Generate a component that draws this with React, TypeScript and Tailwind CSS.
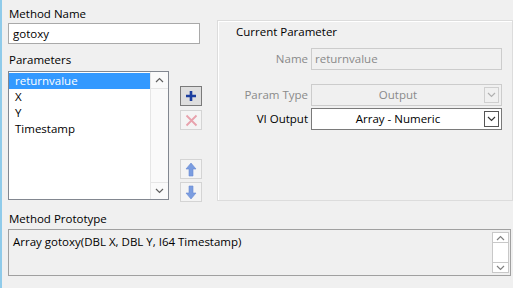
import React from "react";

const items = ["returnvalue", "X", "Y", "Timestamp"];

function Chevron({ up = false, color = "#606060" }: { up?: boolean; color?: string }) {
  return (
    <svg width="9" height="6" viewBox="0 0 9 6">
      <path
        d={up ? "M1 5 L4.5 1.5 L8 5" : "M1 1 L4.5 4.5 L8 1"}
        fill="none"
        stroke={color}
        strokeWidth="1.2"
      />
    </svg>
  );
}

function ComboBox({ value, disabled }: { value: string; disabled?: boolean }) {
  return (
    <div
      className={`flex h-[22px] w-[191px] items-center border ${
        disabled ? "border-[#cccccc] bg-[#f0f0f0] text-[#8a8a8a]" : "border-[#7a7a7a] bg-white text-black"
      }`}
    >
      <div className="flex-1 text-center">{value}</div>
      <div
        className={`mr-[2px] flex h-[16px] w-[15px] items-center justify-center border ${
          disabled ? "border-[#cfcfcf]" : "border-[#555555]"
        }`}
      >
        <Chevron color={disabled ? "#b0b0b0" : "#333333"} />
      </div>
    </div>
  );
}

function ToolButton({ children, enabled }: { children: React.ReactNode; enabled?: boolean }) {
  return (
    <div
      className={`flex h-[20px] w-[22px] items-center justify-center border ${
        enabled ? "border-[#7a7a7a] bg-[#dedede]" : "border-[#d4d4d4] bg-[#f4f4f4]"
      }`}
    >
      {children}
    </div>
  );
}

export default function App() {
  return (
    <div className="flex h-[288px] w-[513px] flex-col overflow-hidden border-l-2 border-[#8fcbea] bg-[#f0f0f0] pl-[6px] pt-[6px] font-['Segoe_UI','Open_Sans',sans-serif] text-[11.5px] leading-[16px] text-black">
      <div className="flex h-[196px]">
        {/* left column */}
        <div className="flex w-[194px] flex-col">
          <div className="pl-[1px]">Method Name</div>
          <div className="mt-[1px] flex h-[22px] w-[192px] items-center border border-[#a9a9a9] bg-white pl-[4px]">
            gotoxy
          </div>
          <div className="mt-[8px] pl-[1px]">Parameters</div>
          <div className="mt-[3px] flex">
            <div className="flex h-[129px] w-[161px] border border-[#828790] bg-white">
              <div className="flex-1 pt-[1px]">
                {items.map((it, i) => (
                  <div
                    key={it}
                    className={`h-[16px] pl-[6px] ${i === 0 ? "bg-[#3399ff] text-white" : ""}`}
                  >
                    {it}
                  </div>
                ))}
              </div>
              <div className="flex w-[18px] flex-col justify-between border-l border-[#e6e6e6] bg-[#fafafa]">
                <div className="flex h-[17px] items-center justify-center border-b border-[#e6e6e6]">
                  <Chevron up />
                </div>
                <div className="flex h-[17px] items-center justify-center border-t border-[#e6e6e6]">
                  <Chevron />
                </div>
              </div>
            </div>
            <div className="ml-[11px] flex flex-col pt-[15px]">
              <ToolButton enabled>
                <svg width="12" height="12" viewBox="0 0 12 12">
                  <path d="M6 1 V11 M1 6 H11" stroke="#1c3e9e" strokeWidth="2.6" />
                </svg>
              </ToolButton>
              <div className="mt-[4px]">
                <ToolButton>
                  <svg width="13" height="13" viewBox="0 0 13 13">
                    <path d="M1.5 1.5 L11.5 11.5 M11.5 1.5 L1.5 11.5" stroke="#e8a2ad" strokeWidth="1.8" />
                  </svg>
                </ToolButton>
              </div>
              <div className="mt-[29px]">
                <ToolButton>
                  <svg width="12" height="15" viewBox="0 0 12 15">
                    <path d="M6 1 L11 7 H8 V14 H4 V7 H1 Z" fill="#7b9de0" stroke="#6a8cd4" strokeWidth="0.6" />
                  </svg>
                </ToolButton>
              </div>
              <div className="mt-[3px]">
                <ToolButton>
                  <svg width="12" height="15" viewBox="0 0 12 15">
                    <path d="M6 14 L11 8 H8 V1 H4 V8 H1 Z" fill="#7b9de0" stroke="#6a8cd4" strokeWidth="0.6" />
                  </svg>
                </ToolButton>
              </div>
            </div>
          </div>
        </div>

        {/* group box */}
        <div className="ml-[15px] mt-[14px] flex h-[181px] flex-1 flex-col border border-[#dcdcdc] shadow-[inset_1px_1px_0_#ffffff]">
          <div className="pl-[18px] pt-[3px]">Current Parameter</div>
          <div className="mt-[8px] flex items-center">
            <div className="w-[93px] pr-[3px] text-right text-[#8a8a8a]">Name</div>
            <div className="flex h-[22px] w-[191px] items-center border border-[#cccccc] bg-[#f0f0f0] pl-[3px] text-[#8a8a8a]">
              returnvalue
            </div>
          </div>
          <div className="mt-[14px] flex items-center">
            <div className="w-[93px] pr-[3px] text-right text-[#8a8a8a]">Param Type</div>
            <ComboBox value="Output" disabled />
          </div>
          <div className="mt-[2px] flex items-center">
            <div className="w-[93px] pr-[3px] text-right">VI Output</div>
            <ComboBox value="Array - Numeric" />
          </div>
        </div>
      </div>

      <div className="mt-[9px] pl-[1px]">Method Prototype</div>
      <div className="mt-[2px] flex h-[47px] w-[503px] border border-[#a0a0a0] bg-[#f0f0f0]">
        <div className="flex-1 pl-[4px] pt-[4px]">Array gotoxy(DBL X, DBL Y, I64 Timestamp)</div>
        <div className="my-[2px] mr-[1px] flex w-[17px] flex-col justify-between border border-[#c8c8c8] bg-white">
          <div className="flex h-[10px] items-center justify-center border-b border-[#c8c8c8]">
            <Chevron up color="#808080" />
          </div>
          <div className="flex h-[10px] items-center justify-center border-t border-[#c8c8c8]">
            <Chevron color="#808080" />
          </div>
        </div>
      </div>
    </div>
  );
}
